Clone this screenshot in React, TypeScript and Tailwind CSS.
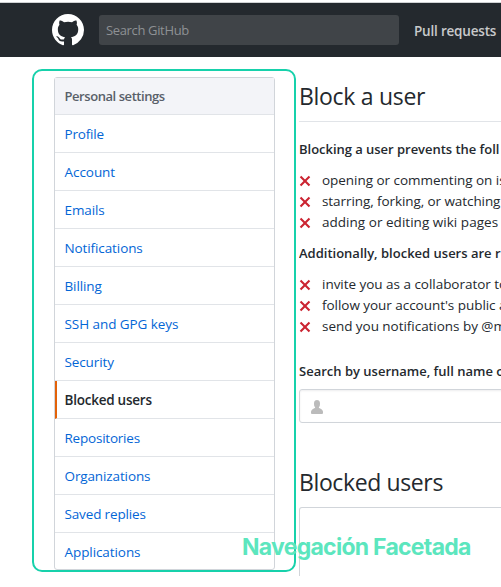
import React from "react";

const links = [
  ["Profile", "tracking-[-0.2px]"],
  ["Account", "tracking-[-0.05px]"],
  ["Emails", "tracking-[-0.1px]"],
  ["Notifications", "tracking-[-0.1px]"],
  ["Billing", "tracking-[-0.1px]"],
  ["SSH and GPG keys", "tracking-[-0.07px]"],
  ["Security", "tracking-[-0.12px]"],
  ["Blocked users", "tracking-[-0.24px]"],
  ["Repositories", "tracking-[-0.22px]"],
  ["Organizations", "tracking-[-0.12px]"],
  ["Saved replies", "tracking-[-0.15px]"],
  ["Applications", "tracking-[-0.08px]"],
];

function Mark() {
  return (
    <svg viewBox="0 0 16 16" className="h-8 w-8 shrink-0 fill-white">
      <path
        fillRule="evenodd"
        d="M8 0C3.58 0 0 3.58 0 8c0 3.54 2.29 6.53 5.47 7.59.4.07.55-.17.55-.38 0-.19-.01-.82-.01-1.49-2.01.37-2.53-.49-2.69-.94-.09-.23-.48-.94-.82-1.13-.28-.15-.68-.52-.01-.53.63-.01 1.08.58 1.23.82.72 1.21 1.87.87 2.33.66.07-.52.28-.87.51-1.07-1.78-.2-3.64-.89-3.64-3.95 0-.87.31-1.59.82-2.15-.08-.2-.36-1.02.08-2.12 0 0 .67-.21 2.2.82.64-.18 1.32-.27 2-.27s1.36.09 2 .27c1.53-1.04 2.2-.82 2.2-.82.44 1.1.16 1.92.08 2.12.51.56.82 1.27.82 2.15 0 3.07-1.87 3.75-3.65 3.95.29.25.54.73.54 1.48 0 1.07-.01 1.93-.01 2.2 0 .21.15.46.55.38A8.01 8.01 0 0 0 16 8c0-4.42-3.58-8-8-8z"
      />
    </svg>
  );
}

function Denied({ items }: { items: [string, string][] }) {
  return (
    <ul>
      {items.map(([text, track]) => (
        <li key={text} className="flex h-[21px] items-center">
          <svg viewBox="0 0 12 16" className="mr-[11px] h-4 w-3 shrink-0 fill-[#cb2431]">
            <path d="M7.48 8l3.75 3.75-1.48 1.48L6 9.48l-3.75 3.75-1.48-1.48L4.52 8 .77 4.25l1.48-1.48L6 6.52l3.75-3.75 1.48 1.48L7.48 8z" />
          </svg>
          <span className={track}>{text}</span>
        </li>
      ))}
    </ul>
  );
}

export default function App() {
  return (
    <div className="relative h-[587px] w-[501px] overflow-hidden whitespace-nowrap bg-white pt-[2px] font-['Open_Sans','Noto_Sans',sans-serif] text-[13.5px] leading-[21px] text-[#24292e]">
      <header className="flex h-[55px] items-center border-t border-[#d0d2d4] bg-[#24292e] pl-[52px]">
        <Mark />
        <div className="ml-[15px] flex h-[30px] w-[300px] shrink-0 items-center rounded-[3px] bg-[#404448] pl-[7px] pt-px text-[13px] text-[#8e9194]">
          <span className="tracking-[-0.35px]">Search GitHub</span>
        </div>
        <span className="ml-[15px] mt-[2px] font-semibold tracking-[-0.2px] text-[#c8c9cb]">Pull requests</span>
      </header>

      <div className="flex pl-[54px]">
        <nav className="mt-5 h-[493px] w-[221px] shrink-0 rounded-[3px] border border-[#d1d5da]">
          <h3 className="flex h-[37px] items-center border-b border-[#e1e4e8] bg-[#f3f4f8] pl-[9.5px] text-[13px] font-semibold tracking-[-0.44px] text-[#586069]">
            <span>Personal settings</span>
          </h3>
          {links.map(([name, track], i) => (
            <a
              key={name}
              className={
                "flex items-center pt-[2px] " +
                (i < 11 ? "h-[38px] border-b border-[#e1e4e8] " : "h-[36px] ") +
                (name === "Blocked users"
                  ? "border-l-2 border-l-[#e36209] pl-[7.5px] font-semibold text-[#24292e]"
                  : "pl-[9.5px] text-[#0366d6]")
              }
            >
              <span className={track}>{name}</span>
            </a>
          ))}
        </nav>

        <main className="ml-6 h-[519px] w-[202px] shrink-0 overflow-hidden">
          <h2 className="mb-[17px] h-[65px] border-b border-[#e1e4e8] pt-[23px] text-[23px] leading-[32px] tracking-[-0.3px]">
            <span>Block a user</span>
          </h2>
          <p className="mb-[10px] text-[13px] font-semibold tracking-[-0.03px]">
            <span>Blocking a user prevents the foll</span>
          </p>
          <Denied
            items={[
              ["opening or commenting on is", "tracking-[-0.03px]"],
              ["starring, forking, or watching", "tracking-[-0.08px]"],
              ["adding or editing wiki pages", "tracking-[0.03px]"],
            ]}
          />
          <p className="mb-[10px] mt-[10px] text-[13px] font-semibold">
            <span>Additionally, blocked users are r</span>
          </p>
          <Denied
            items={[
              ["invite you as a collaborator to", "tracking-[-0.03px]"],
              ["follow your account's public a", "tracking-[-0.04px]"],
              ["send you notifications by @m", "tracking-[-0.04px]"],
            ]}
          />
          <p className="mt-6 text-[13px] font-semibold">
            <span>Search by username, full name o</span>
          </p>
          <div className="mt-[7px] flex h-[34px] w-[300px] items-center rounded-[3px] border border-[#d1d5da] pl-[11px] pt-[2px] shadow-[inset_0_1px_2px_rgba(27,31,35,0.075)]">
            <svg viewBox="0 0 12 16" className="h-4 w-3 fill-[#bbbbbb]">
              <path d="M12 14.002a.998.998 0 01-.998.998H1.001A1 1 0 010 13.999V13c0-2.633 4-4 4-4s.229-.409 0-1c-.841-.62-.944-1.59-1-4 .173-2.413 1.867-3 3-3s2.827.586 3 3c-.056 2.41-.159 3.38-1 4-.229.59 0 1 0 1s4 1.367 4 4v1.002z" />
            </svg>
          </div>
          <h2 className="mt-[43px] text-[23px] leading-[32px] tracking-[-0.38px]">
            <span>Blocked users</span>
          </h2>
          <div className="mt-[9px] h-[69px] w-[300px] rounded-t-[3px] border border-b-0 border-[#d1d5da]" />
        </main>
      </div>

      <div className="absolute left-[32px] top-[69px] h-[503px] w-[264px] rounded-[10px] border-2 border-[#17d1ab]" />
      <div className="absolute left-[242px] top-[533px] font-[Inter,sans-serif] text-[23px] font-bold leading-[28px] tracking-[-0.73px] text-[#5ce6be]">
        Navegación Facetada
      </div>
    </div>
  );
}
